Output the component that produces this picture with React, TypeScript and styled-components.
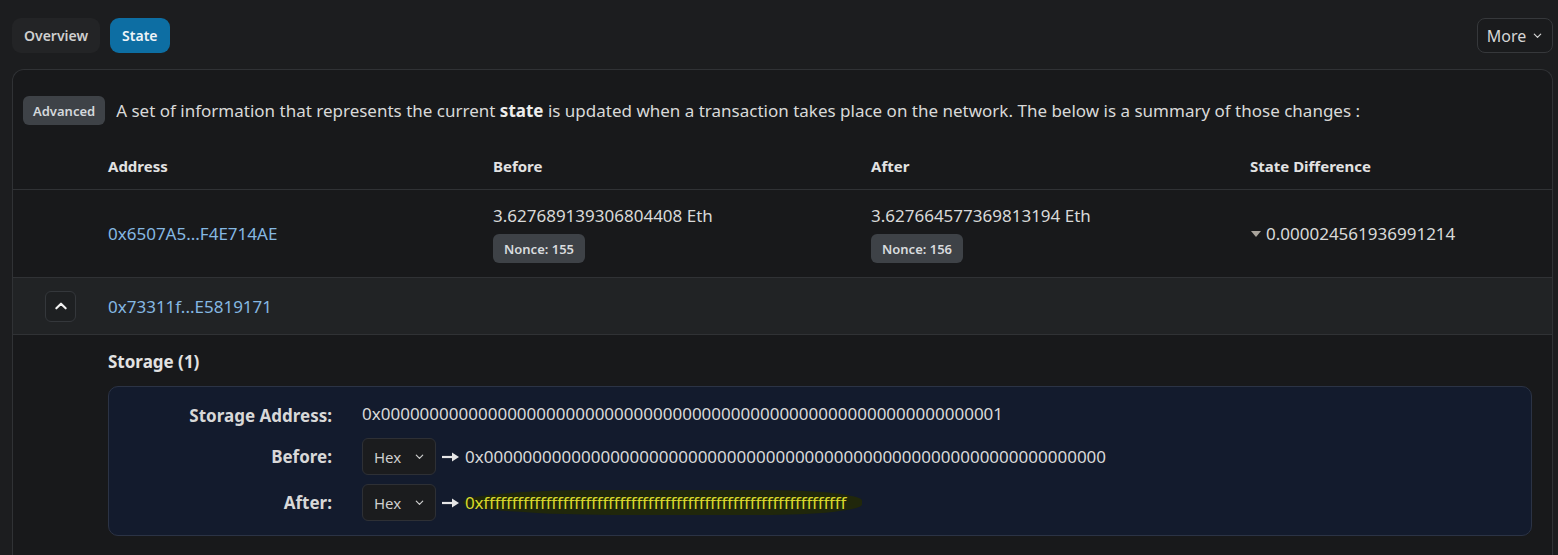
import React from 'react'
import styled, { createGlobalStyle } from 'styled-components'

const GlobalStyle = createGlobalStyle`
  html, body {
    margin: 0;
    padding: 0;
    background: #1c1d1f;
    color: #d9d9d9;
    font-family: "Noto Sans", "Open Sans", sans-serif;
  }
  * {
    box-sizing: border-box;
  }
`

const Page = styled.div`
  padding: 18px 5px 0 12px;
  height: 555px;
  overflow: hidden;
`

const TopBar = styled.div`
  display: flex;
  justify-content: space-between;
  align-items: center;
  height: 35px;
`

const Tabs = styled.div`
  display: flex;
  gap: 10px;
`

const Tab = styled.button<{ $active?: boolean }>`
  height: 35px;
  padding: 0 12px;
  border: none;
  border-radius: 9px;
  background: ${({ $active }) => ($active ? '#0d6ea3' : '#232426')};
  color: ${({ $active }) => ($active ? '#eef4f8' : '#cfcfcf')};
  font-family: "Noto Sans", sans-serif;
  font-size: 14px;
  font-weight: 600;
  cursor: pointer;
`

const MoreButton = styled.button`
  height: 35px;
  width: 76px;
  display: flex;
  align-items: center;
  justify-content: center;
  gap: 6px;
  background: #1a1b1d;
  border: 1px solid #36383b;
  border-radius: 8px;
  color: #d6d6d6;
  font-family: "Noto Sans", sans-serif;
  font-size: 16px;
  cursor: pointer;
`

const Card = styled.div`
  margin-top: 16px;
  border: 1px solid #303235;
  border-bottom: none;
  border-radius: 12px 12px 0 0;
  background: #18191b;
  height: 600px;
`

const Intro = styled.div`
  display: flex;
  align-items: center;
  gap: 11px;
  padding: 26px 10px 0 10px;
  font-size: 17px;
  color: #d9d9d9;

  b {
    font-weight: 700;
    color: #ececec;
  }
`

const Badge = styled.span`
  display: inline-flex;
  align-items: center;
  height: 29px;
  padding: 0 10px;
  border-radius: 6px;
  background: #3e4247;
  color: #d4d8dc;
  font-size: 13px;
  font-weight: 600;
  white-space: nowrap;
`

const Row = styled.div<{ $height: number; $bg?: string }>`
  display: grid;
  grid-template-columns: 95px 385px 378px 379px 1fr;
  align-items: center;
  height: ${({ $height }) => $height}px;
  background: ${({ $bg }) => $bg || 'transparent'};
  border-bottom: 1px solid #303235;
`

const HeaderRow = styled(Row)`
  margin-top: 17px;
  font-size: 15px;
  font-weight: 700;
  color: #e2e2e2;
`

const Cell = styled.div`
  display: flex;
  flex-direction: column;
  align-items: flex-start;
  gap: 7px;
  font-size: 17px;
  color: #d9d9d9;
`

const AddressLink = styled.a`
  color: #85b8e2;
  font-size: 17px;
  text-decoration: none;
`

const Nonce = styled.span`
  display: inline-flex;
  align-items: center;
  height: 29px;
  padding: 0 11px;
  border-radius: 6px;
  background: #3e4247;
  color: #d8dbde;
  font-size: 13px;
  font-weight: 600;
`

const Diff = styled.div`
  display: flex;
  align-items: center;
  gap: 4px;
  font-size: 17px;
  color: #d9d9d9;
`

const ToggleButton = styled.button`
  justify-self: start;
  margin-left: 32px;
  width: 31px;
  height: 31px;
  display: flex;
  align-items: center;
  justify-content: center;
  padding: 0;
  border: 1px solid #34373b;
  border-radius: 6px;
  background: #1e2022;
  cursor: pointer;
`

const StorageSection = styled.div`
  padding: 15px 20px 0 95px;
`

const StorageTitle = styled.div`
  font-size: 17px;
  font-weight: 700;
  color: #e2e2e2;
  line-height: 24px;
`

const StorageBox = styled.div`
  margin-top: 12px;
  background: #131b2d;
  border: 1px solid #2b3345;
  border-radius: 10px;
  padding: 15px 0 14px 0;
  display: grid;
  grid-template-columns: 223px 1fr;
  column-gap: 30px;
  row-gap: 9px;
  align-items: center;
`

const Label = styled.div`
  text-align: right;
  font-size: 17px;
  font-weight: 700;
  color: #d8d8d8;
`

const Value = styled.div`
  display: flex;
  align-items: center;
  gap: 5px;
  font-size: 17px;
  color: #d9d9d9;
  white-space: nowrap;
`

const FirstValue = styled(Value)`
  margin-bottom: 4px;
`

const Select = styled.div`
  width: 74px;
  height: 37px;
  display: flex;
  align-items: center;
  justify-content: space-between;
  padding: 0 10px 0 11px;
  background: #1b1c1e;
  border: 1px solid #2e3035;
  border-radius: 6px;
  color: #cfcfcf;
  font-size: 15px;
`

const Highlight = styled.span`
  color: #d9d92c;
  background: #20270b;
  letter-spacing: -0.18px;
  border-radius: 40% 30% 30% 50% / 60% 50% 50% 60%;
  padding: 1px 16px 1px 2px;
  margin-left: -2px;
`

const Chevron = ({ up, size = 12, color = '#cfcfcf' }: { up?: boolean; size?: number; color?: string }) => (
  <svg width={size} height={size} viewBox="0 0 12 12" fill="none">
    <path
      d={up ? 'M2 8 L6 4 L10 8' : 'M2.5 4.5 L6 8 L9.5 4.5'}
      stroke={color}
      strokeWidth={up ? 1.8 : 1.3}
      strokeLinecap="round"
      strokeLinejoin="round"
    />
  </svg>
)

const Arrow = () => (
  <svg width="19" height="12" viewBox="0 0 19 12">
    <path d="M1 6 H12" stroke="#e6e6e6" strokeWidth="2.2" />
    <path d="M11 1.5 L18 6 L11 10.5 Z" fill="#e6e6e6" />
  </svg>
)

const Caret = () => (
  <svg width="12" height="10" viewBox="0 0 12 10">
    <path d="M1 2 H11 L6 8 Z" fill="#a9a49c" />
  </svg>
)

const App: React.FC = () => {
  const zeros = '0x' + '0'.repeat(64)
  const storageAddress = '0x' + '0'.repeat(63) + '1'
  const ffs = '0x' + 'f'.repeat(64)

  return (
    <>
      <GlobalStyle />
      <Page>
        <TopBar>
          <Tabs>
            <Tab>Overview</Tab>
            <Tab $active>State</Tab>
          </Tabs>
          <MoreButton>
            More <Chevron size={11} color="#d6d6d6" />
          </MoreButton>
        </TopBar>

        <Card>
          <Intro>
            <Badge>Advanced</Badge>
            <span>
              A set of information that represents the current <b>state</b> is updated when a
              transaction takes place on the network. The below is a summary of those changes :
            </span>
          </Intro>

          <HeaderRow $height={48}>
            <div />
            <div>Address</div>
            <div>Before</div>
            <div>After</div>
            <div>State Difference</div>
          </HeaderRow>

          <Row $height={88}>
            <div />
            <Cell>
              <AddressLink href="#">0x6507A5...F4E714AE</AddressLink>
            </Cell>
            <Cell>
              <span>3.627689139306804408 Eth</span>
              <Nonce>Nonce: 155</Nonce>
            </Cell>
            <Cell>
              <span>3.627664577369813194 Eth</span>
              <Nonce>Nonce: 156</Nonce>
            </Cell>
            <Diff>
              <Caret />
              0.000024561936991214
            </Diff>
          </Row>

          <Row $height={57} $bg="#212325">
            <ToggleButton>
              <Chevron up size={14} color="#f2f2f2" />
            </ToggleButton>
            <Cell>
              <AddressLink href="#">0x73311f...E5819171</AddressLink>
            </Cell>
          </Row>

          <StorageSection>
            <StorageTitle>Storage (1)</StorageTitle>
            <StorageBox>
              <Label>Storage Address:</Label>
              <FirstValue>{storageAddress}</FirstValue>

              <Label>Before:</Label>
              <Value>
                <Select>
                  Hex <Chevron size={11} />
                </Select>
                <Arrow />
                {zeros}
              </Value>

              <Label>After:</Label>
              <Value>
                <Select>
                  Hex <Chevron size={11} />
                </Select>
                <Arrow />
                <Highlight>{ffs}</Highlight>
              </Value>
            </StorageBox>
          </StorageSection>
        </Card>
      </Page>
    </>
  )
}

export default App
